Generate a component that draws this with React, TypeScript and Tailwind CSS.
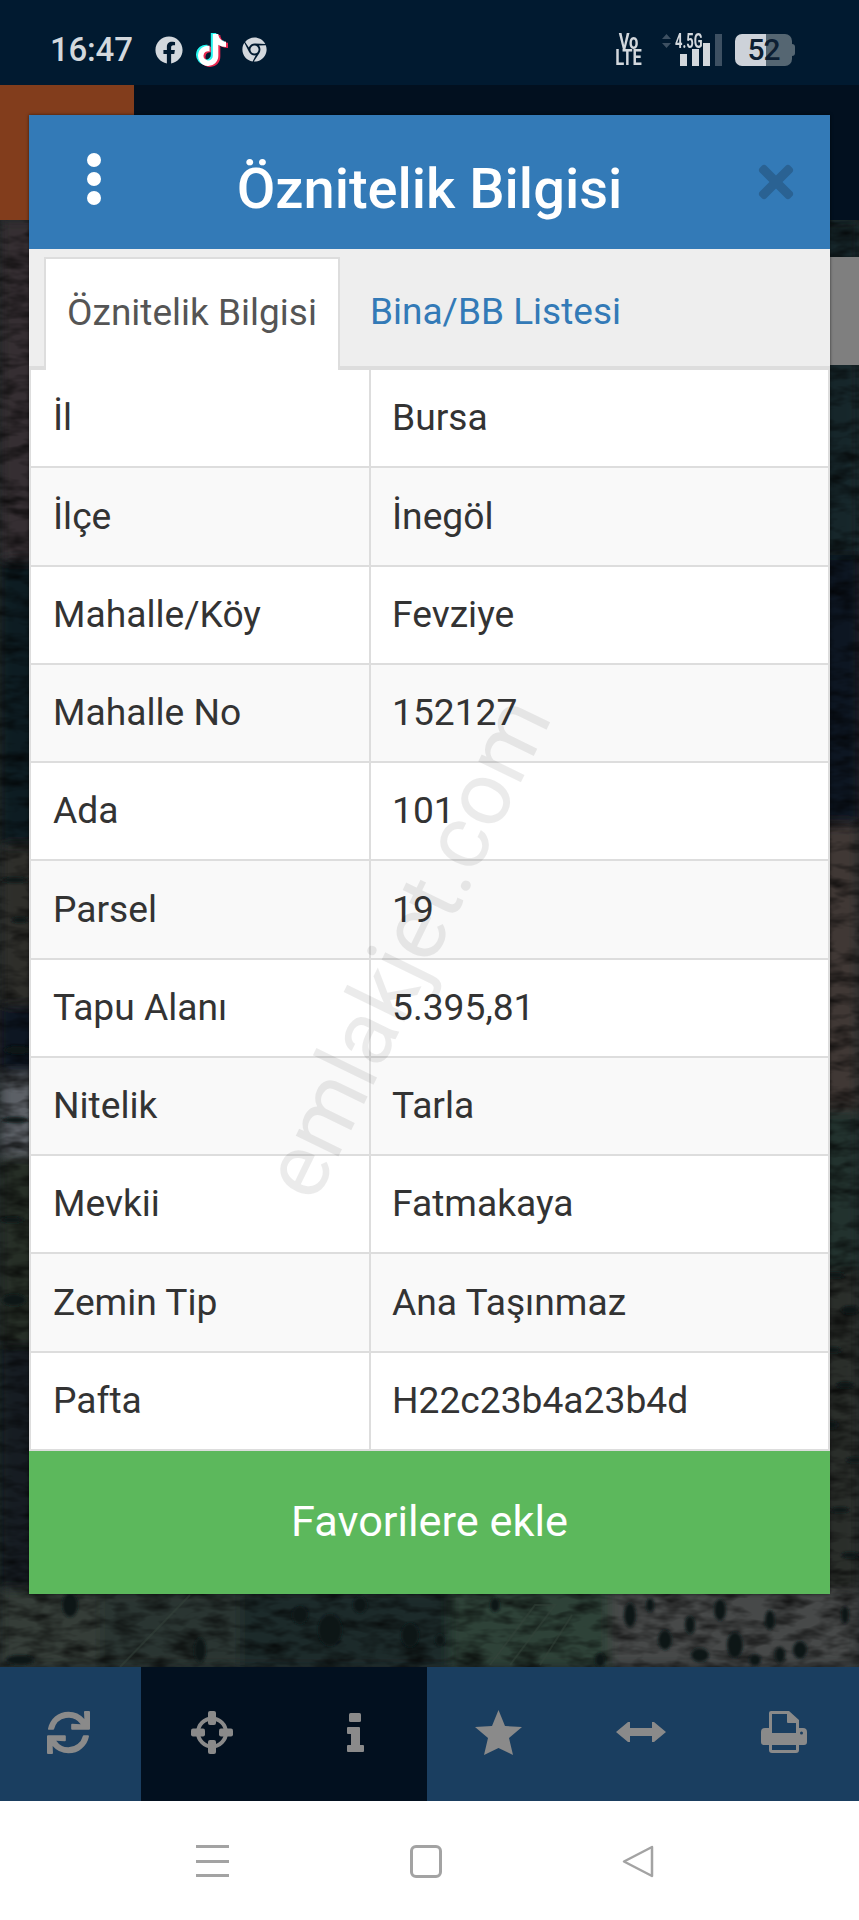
import { FaFacebook, FaTiktok, FaChrome, FaSync, FaTimes } from 'react-icons/fa';

const rows = [
  ['İl', 'Bursa'],
  ['İlçe', 'İnegöl'],
  ['Mahalle/Köy', 'Fevziye'],
  ['Mahalle No', '152127'],
  ['Ada', '101'],
  ['Parsel', '19'],
  ['Tapu Alanı', '5.395,81'],
  ['Nitelik', 'Tarla'],
  ['Mevkii', 'Fatmakaya'],
  ['Zemin Tip', 'Ana Taşınmaz'],
  ['Pafta', 'H22c23b4a23b4d'],
];

// map patches: x, y (from map top), w, h, colour
const patches: [number, number, number, number, string][] = [
  [0, 0, 40, 340, '#352f31'],
  [0, 340, 40, 290, '#0f1a24'],
  [0, 625, 40, 160, '#2e2e2c'],
  [0, 785, 40, 70, '#101820'],
  [0, 855, 40, 80, '#5c6066'],
  [0, 935, 40, 190, '#252d28'],
  [0, 1125, 40, 322, '#131d22'],
  [820, 0, 39, 340, '#16282a'],
  [820, 335, 39, 270, '#0b1520'],
  [820, 605, 39, 285, '#403936'],
  [820, 890, 39, 160, '#22302e'],
  [820, 1050, 39, 397, '#2a2d2c'],
  [0, 1370, 100, 77, '#343c37'],
  [100, 1370, 140, 77, '#2b3633'],
  [240, 1370, 230, 77, '#1f2a2c'],
  [450, 1370, 160, 77, '#2f4238'],
  [610, 1370, 249, 77, '#474a49'],
];

// dark tree spots on the visible edges of the map
const spots = [
  [630, 1395, 6, 12], [665, 1420, 7, 10], [690, 1405, 5, 9], [720, 1390, 6, 11], [735, 1425, 8, 13], [700, 1435, 9, 7],
  [770, 1400, 5, 10], [800, 1430, 7, 9], [845, 1395, 4, 9], [410, 1415, 9, 12], [440, 1420, 5, 6], [330, 1410, 12, 16],
  [70, 1385, 8, 12], [495, 1385, 5, 7], [835, 1055, 10, 3], [850, 1090, 9, 4], [832, 1130, 10, 3], [845, 1165, 9, 3],
  [830, 1205, 8, 4], [855, 1240, 9, 3], [840, 1290, 10, 3], [850, 1335, 9, 3], [15, 900, 14, 3], [12, 1000, 12, 3],
  [18, 830, 14, 4], [14, 1080, 12, 6], [15, 660, 14, 3], [20, 700, 9, 3],
  [650, 1385, 4, 7], [755, 1440, 6, 6], [780, 1435, 5, 8], [600, 1440, 5, 7], [300, 1395, 8, 9], [360, 1385, 7, 8],
  [20, 1440, 14, 5], [200, 1430, 6, 12],
];

function MapBackground() {
  return (
    <svg className="absolute inset-0 w-full h-full" viewBox="0 0 859 1447" preserveAspectRatio="none">
      <defs>
        <filter id="soft">
          <feGaussianBlur stdDeviation="6" />
        </filter>
        <filter id="spotblur">
          <feGaussianBlur stdDeviation="1.5" />
        </filter>
        <filter id="grain">
          <feTurbulence type="fractalNoise" baseFrequency="0.035 0.09" numOctaves="3" seed="4" />
          <feColorMatrix values="0 0 0 0 0  0 0 0 0 0  0 0 0 0 0  0 0 0 1.4 -0.55" />
        </filter>
      </defs>
      <rect width="859" height="1447" fill="#1d2526" />
      <g filter="url(#soft)">
        {patches.map(([x, y, w, h, c], i) => (
          <rect key={i} x={x} y={y} width={w} height={h} fill={c} />
        ))}
      </g>
      <rect width="859" height="1447" filter="url(#grain)" />
      <g stroke="#35443b" strokeWidth="2" fill="none" opacity="0.5">
        <path d="M120 1447 L190 1375" />
        <path d="M490 1445 L535 1385 L555 1385 L510 1445" />
        <path d="M540 1445 L572 1395" />
      </g>
      <g filter="url(#spotblur)" fill="#0c1214">
        {spots.map(([cx, cy, rx, ry], i) => (
          <ellipse key={i} cx={cx} cy={cy} rx={rx} ry={ry} />
        ))}
      </g>
    </svg>
  );
}

function CrosshairIcon() {
  return (
    <svg viewBox="0 0 42 43" className="w-[42px] h-[43px]" fill="#8a8a8a">
      <circle cx="21" cy="21.5" r="14" fill="none" stroke="#8a8a8a" strokeWidth="4" />
      <rect x="17" y="0" width="8" height="14" rx="2" />
      <rect x="17" y="29" width="8" height="14" rx="2" />
      <rect x="0" y="17.5" width="14" height="8" rx="2" />
      <rect x="28" y="17.5" width="14" height="8" rx="2" />
    </svg>
  );
}

function InfoIcon() {
  return (
    <svg viewBox="0 0 17 39" className="w-[17px] h-[39px]" fill="#8a8a8a">
      <rect x="2" y="0" width="12" height="9" rx="1.5" />
      <path d="M1 14h11a1 1 0 0 1 1 1v17h3a1 1 0 0 1 1 1v5a1 1 0 0 1-1 1H1a1 1 0 0 1-1-1v-5a1 1 0 0 1 1-1h3v-11H1a1 1 0 0 1-1-1v-5a1 1 0 0 1 1-1z" />
    </svg>
  );
}

function StarIcon() {
  return (
    <svg viewBox="0 0 47 45" className="w-[47px] h-[45px]" fill="#8a8a8a">
      <polygon points="23.5,0 30,16 47,17 34,28 38,45 23.5,38 9,45 13,28 0,17 17,16" />
    </svg>
  );
}

function ArrowsIcon() {
  return (
    <svg viewBox="0 0 50 20" className="w-[50px] h-[20px]" fill="#8a8a8a">
      <path d="M0 10 L12 0 H14 V6 H36 V0 H38 L50 10 L38 20 H36 V14 H14 V20 H12 Z" />
    </svg>
  );
}

function PrintIcon() {
  return (
    <svg viewBox="0 0 46 42" className="w-[46px] h-[42px]" fill="#8a8a8a">
      <path
        fillRule="evenodd"
        d="M10 0H28L38 9V17H42a4 4 0 0 1 4 4V31a3 3 0 0 1-3 3H38V39a3 3 0 0 1-3 3H11a3 3 0 0 1-3-3V34H3a3 3 0 0 1-3-3V21a4 4 0 0 1 4-4H8V2a2 2 0 0 1 2-2ZM11 3V22H35V12H27a1 1 0 0 1-1-1V3ZM11 34V39H35V34ZM39 22a1.5 1.5 0 1 0 3 0a1.5 1.5 0 1 0-3 0Z"
      />
    </svg>
  );
}

function StatusBar() {
  return (
    <div className="h-[85px] bg-[#011a30] flex items-center pl-[50px] pr-[64px] pt-[14px]">
      <span className="text-[33px] font-medium text-[#d3d8dd] w-[105px] -tracking-[0.2px]">16:47</span>
      <FaFacebook className="text-[#d3d8dd] w-[28px] h-[28px]" />
      <FaTiktok className="text-white w-[28px] h-[32px] ml-[15px] [filter:drop-shadow(-2px_-1px_0_#25f4ee)_drop-shadow(2px_1px_0_#e8274f)]" />
      <FaChrome className="text-[#d3d8dd] w-[25px] h-[25px] ml-[16px]" />
      <div className="flex-1" />
      <div className="flex flex-col items-center w-[29px] text-[#d3d8dd] font-bold text-[22px] leading-[16px] scale-x-75">
        <span>Vo</span>
        <span>LTE</span>
      </div>
      <div className="relative flex items-end gap-[4.5px] ml-[19px] pl-[18px] h-[32px] w-[60px]">
        <svg viewBox="0 0 9 14" className="absolute left-0 top-0 w-[9px] h-[14px]" fill="#3d5062">
          <path d="M4.5 0L9 5H0ZM0 9H9L4.5 14Z" />
        </svg>
        <span className="absolute left-[13px] top-0 text-[20px] font-bold text-[#d3d8dd] leading-[15px] scale-x-[0.65] origin-left">4.5G</span>
        <span className="w-[7px] h-[12px] shrink-0 bg-[#d3d8dd]" />
        <span className="w-[7px] h-[17px] shrink-0 bg-[#d3d8dd]" />
        <span className="w-[7px] h-[23px] shrink-0 bg-[#d3d8dd]" />
        <span className="w-[7px] h-[32px] shrink-0 bg-[#3d5062]" />
      </div>
      <div className="relative flex ml-[13px] h-[32px] w-[57px] rounded-[7px] overflow-hidden">
        <div className="w-[31px] bg-[#cdd2d9]" />
        <div className="flex-1 bg-[#556672]" />
        <span className="absolute inset-0 flex items-center justify-center text-[30px] font-medium -tracking-[1px] text-[#0d1f33]">52</span>
      </div>
      <div className="w-[3px] h-[12px] bg-[#556672] rounded-r-sm" />
    </div>
  );
}

function AttributeModal() {
  return (
    <div className="absolute left-[29px] top-[115px] w-[801px] h-[1479px] flex flex-col shadow-[0_0_3px_rgba(0,0,0,0.6)]">
      <div className="h-[134px] bg-[#337ab7] grid grid-cols-[1fr_auto_1fr] items-center">
        <div className="flex flex-col gap-[5px] pl-[58px] -mt-[6px]">
          <span className="w-[14px] h-[14px] rounded-full bg-white" />
          <span className="w-[14px] h-[14px] rounded-full bg-white" />
          <span className="w-[14px] h-[14px] rounded-full bg-white" />
        </div>
        <h1 className="text-center text-[56px] font-medium text-white leading-none mt-[14px]">Öznitelik Bilgisi</h1>
        <div className="flex justify-end pr-[32px]">
          <FaTimes className="w-[44px] h-[50px] text-[#2a6293]" />
        </div>
      </div>

      <div className="h-[121px] bg-[#eeeeee] flex items-end pl-[15px] border-b-[4px] border-[#dddddd]">
        <div className="w-[296px] h-[113px] -mb-[4px] pb-[3px] bg-white border-2 border-b-0 border-[#dddddd] flex items-center justify-center text-[37px] text-[#555555]">
          Öznitelik Bilgisi
        </div>
        <div className="h-[113px] -mb-[4px] pb-[3px] pl-[30px] flex items-center text-[37px] text-[#337ab7]">Bina/BB Listesi</div>
      </div>

      <div className="relative h-[1081px] flex flex-col bg-white text-[37.2px] text-[#333333] border-x-2 border-[#dddddd]">
        {rows.map(([label, value], i) => (
          <div key={label} className={`flex-1 flex border-b-2 border-[#dddddd] ${i % 2 === 1 ? 'bg-[#f9f9f9]' : 'bg-white'}`}>
            <div className="w-[340px] pl-[22px] flex items-center border-r-2 border-[#dddddd]">{label}</div>
            <div className="flex-1 pl-[21px] flex items-center">{value}</div>
          </div>
        ))}
        {/* site watermark across the table */}
        <div className="absolute left-[375px] top-[577px] w-0 h-0 flex items-center justify-center pointer-events-none">
          <span className="-rotate-[64deg] text-[90px] font-normal text-black/[0.08] whitespace-nowrap">emlakjet.com</span>
        </div>
      </div>

      <button className="flex-1 bg-[#5cb85c] text-white text-[43.3px] flex items-center justify-center">Favorilere ekle</button>
    </div>
  );
}

export default function App() {
  return (
    <div className="relative w-[859px] h-[1920px] flex flex-col overflow-hidden font-['Roboto',sans-serif]">
      <StatusBar />
      <div className="h-[135px] bg-[#02101f] flex">
        <div className="w-[134px] bg-[#823d1c]" />
      </div>

      <div className="relative flex-1">
        <MapBackground />
        <div className="absolute right-0 top-[37px] w-[29px] h-[108px] bg-[#7f7f7f]" />
      </div>

      <div className="h-[134px] grid grid-cols-[141px_143px_143px_1fr_1fr_1fr] bg-[#1a3e60] text-[#8a8a8a]">
        <div className="flex items-center justify-center pr-[4px] pb-[4px]"><FaSync className="w-[43px] h-[43px]" /></div>
        <div className="flex items-center justify-center pr-[2px] pb-[4px] bg-[#02101f]"><CrosshairIcon /></div>
        <div className="flex items-center justify-center pb-[4px] bg-[#02101f]"><InfoIcon /></div>
        <div className="flex items-center justify-center pr-[2px] pb-[4px]"><StarIcon /></div>
        <div className="flex items-center justify-center pr-[4px] pb-[4px]"><ArrowsIcon /></div>
        <div className="flex items-center justify-center pr-[6px] pb-[4px]"><PrintIcon /></div>
      </div>

      <div className="h-[119px] bg-white flex items-start pt-[44px]">
        <div className="ml-[196px] w-[33px] h-[32px] flex flex-col justify-between">
          <span className="h-[3px] bg-[#a3a3a3]" />
          <span className="h-[3px] bg-[#a3a3a3]" />
          <span className="h-[3px] bg-[#a3a3a3]" />
        </div>
        <div className="ml-[181px] w-[32px] h-[33px] border-[3px] border-[#a3a3a3] rounded-[6px]" />
        <svg viewBox="0 0 32 33" className="ml-[180px] w-[32px] h-[33px]" fill="none" stroke="#a3a3a3" strokeWidth="2.5" strokeLinejoin="round">
          <path d="M30 2 L2 16.5 L30 31 Z" />
        </svg>
      </div>

      <AttributeModal />
    </div>
  );
}
